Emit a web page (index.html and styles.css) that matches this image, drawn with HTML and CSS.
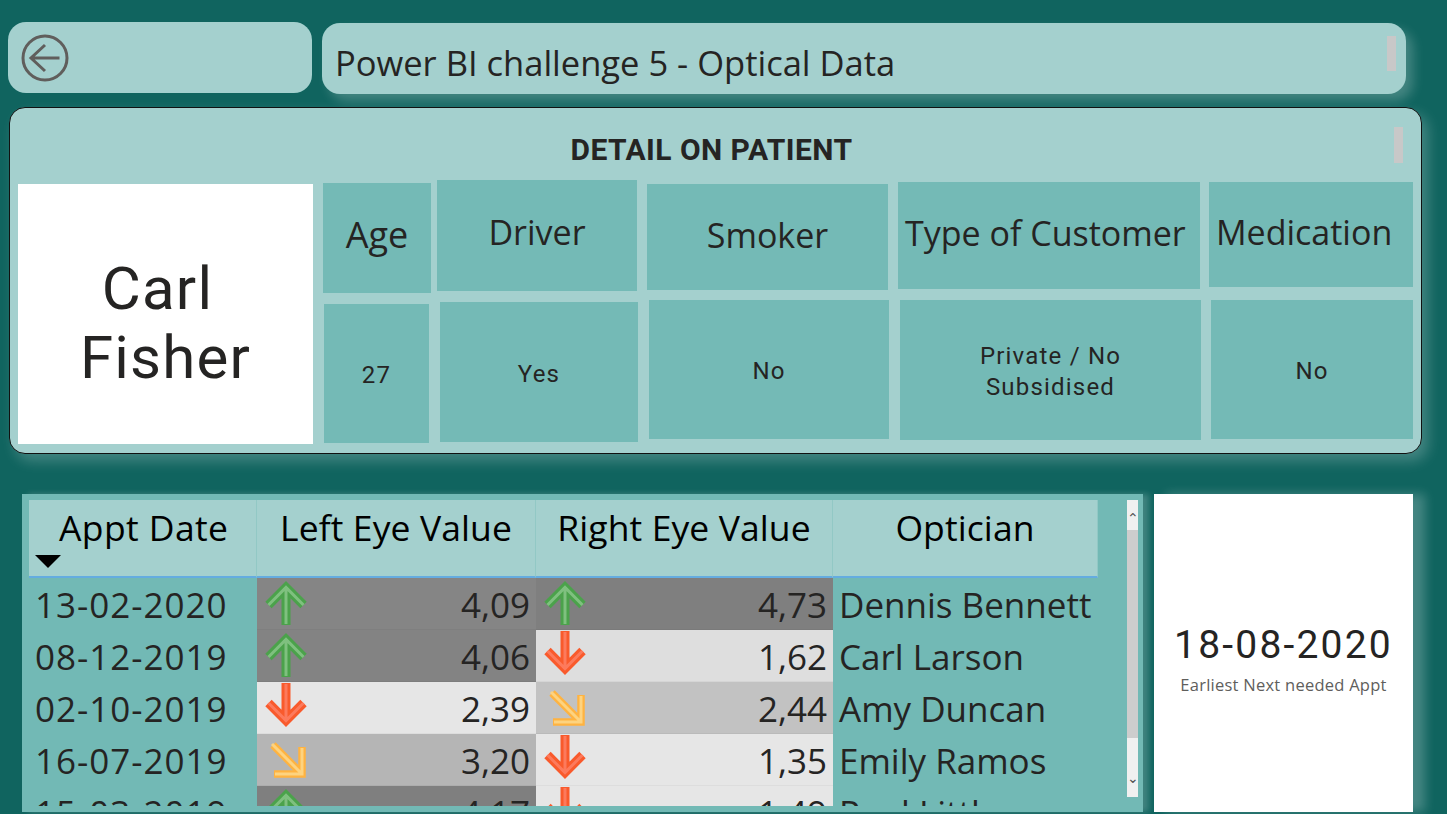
FILE: index.html
```html
<!DOCTYPE html>
<html lang="en">
<head>
<meta charset="utf-8">
<title>Power BI challenge 5 - Optical Data</title>
<link rel="stylesheet" href="styles.css">
</head>
<body>
<svg class="defs" width="0" height="0" aria-hidden="true">
  <symbol id="up" viewBox="0 0 44 46">
    <path d="M4.500 26 22 8.400 39.500 26M22 8.400V46" fill="none" stroke="#4ba24b" stroke-width="9"/>
    <path d="M4.500 26 22 8.400 39.500 26M22 10V45" fill="none" stroke="#7fc07f" stroke-width="3"/>
  </symbol>
  <symbol id="down" viewBox="0 0 44 46">
    <path d="M4.500 20 22 37.600 39.500 20M22 37.600V0" fill="none" stroke="#f95a2c" stroke-width="9"/>
    <path d="M4.500 20 22 37.600 39.500 20M22 36V1" fill="none" stroke="#fd7a5c" stroke-width="3"/>
  </symbol>
  <symbol id="diag" viewBox="0 0 38 38">
    <path d="M3 3 32 32M32 5V32H4" fill="none" stroke="#ffb340" stroke-width="7.500"/>
    <path d="M2 2 32 32M32 6V32H5" fill="none" stroke="#fdd380" stroke-width="3"/>
  </symbol>
</svg>

<div class="top">
  <div class="card back">
    <svg class="back-icon" width="48" height="48" viewBox="0 0 48 48" aria-label="Back">
      <circle cx="24" cy="24" r="22" fill="none" stroke="#605e5c" stroke-width="3"/>
      <path d="M38.500 24H10M24 11 10 24 24 37" fill="none" stroke="#605e5c" stroke-width="3"/>
    </svg>
  </div>
  <div class="card title">
    <span>Power BI challenge 5 - Optical Data</span>
    <i class="grip grip-title"></i>
  </div>
</div>

<section class="detail">
  <h1>DETAIL ON PATIENT</h1>
  <i class="grip grip-detail"></i>
  <div class="detail-row">
    <div class="name"><span class="first">Carl</span><span>Fisher</span></div>
    <div class="col col-age">
      <div class="head">Age</div>
      <div class="val">27</div>
    </div>
    <div class="col col-driver">
      <div class="head">Driver</div>
      <div class="val">Yes</div>
    </div>
    <div class="col col-smoker">
      <div class="head">Smoker</div>
      <div class="val">No</div>
    </div>
    <div class="col col-type">
      <div class="head">Type of Customer</div>
      <div class="val">Private / No<br>Subsidised</div>
    </div>
    <div class="col col-med">
      <div class="head">Medication</div>
      <div class="val">No</div>
    </div>
  </div>
</section>

<div class="lower">
  <div class="table-card">
    <div class="table">
      <div class="th th-date">Appt Date<i class="sort"></i></div>
      <div class="th">Left Eye Value</div>
      <div class="th">Right Eye Value</div>
      <div class="th">Optician</div>

      <div class="td date">13-02-2020</div>
      <div class="td num g1"><svg class="arrow"><use href="#up"/></svg>4,09</div>
      <div class="td num g2"><svg class="arrow"><use href="#up"/></svg>4,73</div>
      <div class="td who">Dennis Bennett</div>

      <div class="td date">08-12-2019</div>
      <div class="td num g3"><svg class="arrow"><use href="#up"/></svg>4,06</div>
      <div class="td num g4"><svg class="arrow"><use href="#down"/></svg>1,62</div>
      <div class="td who">Carl Larson</div>

      <div class="td date">02-10-2019</div>
      <div class="td num g5"><svg class="arrow"><use href="#down"/></svg>2,39</div>
      <div class="td num g6"><svg class="arrow small"><use href="#diag"/></svg>2,44</div>
      <div class="td who">Amy Duncan</div>

      <div class="td date">16-07-2019</div>
      <div class="td num g7"><svg class="arrow small"><use href="#diag"/></svg>3,20</div>
      <div class="td num g5"><svg class="arrow"><use href="#down"/></svg>1,35</div>
      <div class="td who">Emily Ramos</div>

      <div class="td date">15-03-2019</div>
      <div class="td num g2"><svg class="arrow"><use href="#up"/></svg>4,17</div>
      <div class="td num g5"><svg class="arrow"><use href="#down"/></svg>1,49</div>
      <div class="td who">Paul Little</div>
    </div>
    <div class="scrollbar">
      <div class="sb-btn">&#8963;</div>
      <div class="sb-thumb"></div>
      <div class="sb-rest"></div>
      <div class="sb-btn sb-down">&#8964;</div>
    </div>
  </div>
  <div class="date-card">
    <div class="big-date">18-08-2020</div>
    <div class="date-label">Earliest Next needed Appt</div>
  </div>
</div>
</body>
</html>
```
FILE: styles.css
```css
* { box-sizing: border-box; }
html, body { margin: 0; height: 100%; }
body {
  width: 1447px;
  height: 814px;
  overflow: hidden;
  background: #10645f;
  color: #252423;
  font-family: "Open Sans", "Liberation Sans", sans-serif;
}
.defs { position: absolute; }

.top { display: flex; align-items: flex-start; padding: 22px 0 0 8px; }
.card { background: #a4d0ce; border-radius: 18px; height: 71px; }
.back { width: 304px; padding: 12px 0 0 13px; }
.back-icon { display: block; }
.title {
  position: relative;
  width: 1084px;
  margin: 1px 0 0 10px;
  padding: 7px 0 0 13px;
  display: flex;
  align-items: center;
  font-size: 34.500px;
  box-shadow: 7px 7px 12px rgba(255, 255, 255, .22);
}
.grip { position: absolute; background: #c8c8c8; width: 9px; }
.grip-title { left: 1065px; top: 13px; height: 35px; }
.grip-detail { left: 1384px; top: 19px; height: 36px; }

.detail {
  position: relative;
  width: 1413px;
  height: 347px;
  margin: 13px 0 0 9px;
  background: #a4d0ce;
  border: 1px solid #111;
  border-radius: 16px;
  box-shadow: 6px 7px 14px rgba(255, 255, 255, .22);
}
.detail h1 {
  margin: 0;
  padding: 24px 8px 0 0;
  height: 72px;
  text-align: center;
  font: 700 30px/36px Roboto, sans-serif;
  letter-spacing: .45px;
}
.detail-row { display: flex; align-items: flex-start; padding-left: 8px; }
.name {
  width: 295px;
  height: 260px;
  margin-top: 4px;
  padding-top: 18px;
  background: #fff;
  font: 400 60px/69px Roboto, sans-serif;
  letter-spacing: 1.200px;
  text-align: center;
  display: flex;
  flex-direction: column;
  justify-content: center;
}
.first { margin-right: 16px; }
.col { display: flex; flex-direction: column; align-items: flex-start; }
.head, .val { background: #74bab6; display: flex; align-items: center; justify-content: center; text-align: center; }
.head { font-size: 34px; padding-bottom: 6px; white-space: nowrap; }
.val { font: 400 24px/31px Roboto, sans-serif; letter-spacing: 1.200px; padding-top: 4px; }

.col-age { width: 108px; margin-left: 10px; padding-top: 3px; }
.col-age .head { width: 108px; height: 110px; font-size: 36px; padding-bottom: 8px; }
.col-age .val { width: 105px; height: 139px; margin: 11px 0 0 1px; padding-top: 3px; }
.col-driver { width: 201px; margin-left: 6px; }
.col-driver .head { width: 200px; height: 111px; padding-bottom: 8px; }
.col-driver .val { width: 198px; height: 140px; margin: 11px 0 0 3px; }
.col-smoker { width: 242px; margin-left: 9px; padding-top: 4px; }
.col-smoker .head { width: 241px; height: 106px; padding-bottom: 5px; }
.col-smoker .val { width: 240px; height: 139px; margin: 10px 0 0 2px; }
.col-type { width: 303px; margin-left: 9px; padding-top: 2px; }
.col-type .head { width: 302px; height: 107px; justify-content: flex-start; padding-left: 7px; }
.col-type .val { width: 301px; height: 140px; margin: 11px 0 0 2px; }
.col-med { width: 204px; margin-left: 8px; padding-top: 2px; }
.col-med .head { width: 204px; height: 105px; justify-content: flex-start; padding-left: 7px; }
.col-med .val { width: 202px; height: 139px; margin: 13px 0 0 2px; }

.lower { display: flex; align-items: flex-start; padding-left: 22px; margin-top: 40px; }
.table-card {
  position: relative;
  width: 1121px;
  height: 318px;
  padding: 6px 0 0 7px;
  background: #72b9b5;
  box-shadow: 6px 0 6px rgba(255, 255, 255, .2);
}
.table {
  display: grid;
  grid-template-columns: 228px 279px 297px 265px;
  grid-template-rows: 78px;
  grid-auto-rows: 52px;
  width: 1069px;
  height: 306px;
  overflow: hidden;
}
.th {
  height: 78px;
  padding-top: 5px;
  background: #a4d0ce;
  border-bottom: 2px solid #64ace0;
  border-right: 1px solid #92c8c5;
  color: #000;
  font-size: 35.500px;
  line-height: 44px;
  letter-spacing: .1px;
  text-align: center;
  white-space: nowrap;
  grid-row: 1;
}
.th:last-of-type { border-right: 0; }
.th-date { position: relative; padding-left: 30px; text-align: left; letter-spacing: .4px; }
.sort {
  position: absolute;
  left: 6px;
  top: 55px;
  border: 13px solid transparent;
  border-top-color: #000;
  border-bottom: 0;
}
.td {
  position: relative;
  font-size: 35px;
  line-height: 50px;
  padding-top: 2px;
  height: 52px;
  white-space: nowrap;
  overflow: hidden;
}
.date { padding-left: 6px; letter-spacing: 1px; }
.who { padding-left: 6px; }
.num { padding-right: 6px; text-align: right; border-bottom: 1px solid rgba(0, 0, 0, .04); }
.g1 { background: #858585; }
.g2 { background: #7f7f7f; }
.g3 { background: #838383; }
.g4 { background: #dedede; }
.g5 { background: #e6e6e6; }
.g6 { background: #c2c2c2; }
.g7 { background: #b5b5b5; }
.arrow { position: absolute; left: 7px; top: 1px; width: 44px; height: 46px; }
.arrow.small { left: 13px; top: 8px; width: 38px; height: 38px; }

.scrollbar {
  position: absolute;
  left: 1105px;
  top: 6px;
  width: 11px;
  height: 297px;
  display: flex;
  flex-direction: column;
  background: #f0f0f0;
  color: #505050;
  font: 14px/36px "DejaVu Sans", sans-serif;
  text-align: center;
}
.sb-btn { height: 30px; overflow: hidden; }
.sb-down { line-height: 22px; }
.sb-thumb { height: 208px; background: #cdcdcd; }
.sb-rest { flex: 1; }

.date-card {
  width: 259px;
  height: 318px;
  margin-left: 11px;
  background: #fff;
  text-align: center;
  display: flex;
  flex-direction: column;
  justify-content: center;
  padding-top: 12px;
  box-shadow: 12px 0 10px rgba(255, 255, 255, .22);
}
.big-date { font: 400 39px/46px Roboto, sans-serif; letter-spacing: 2.200px; }
.date-label { font-size: 16.500px; line-height: 22px; letter-spacing: .25px; color: #605e5c; margin-top: 6px; }
```
